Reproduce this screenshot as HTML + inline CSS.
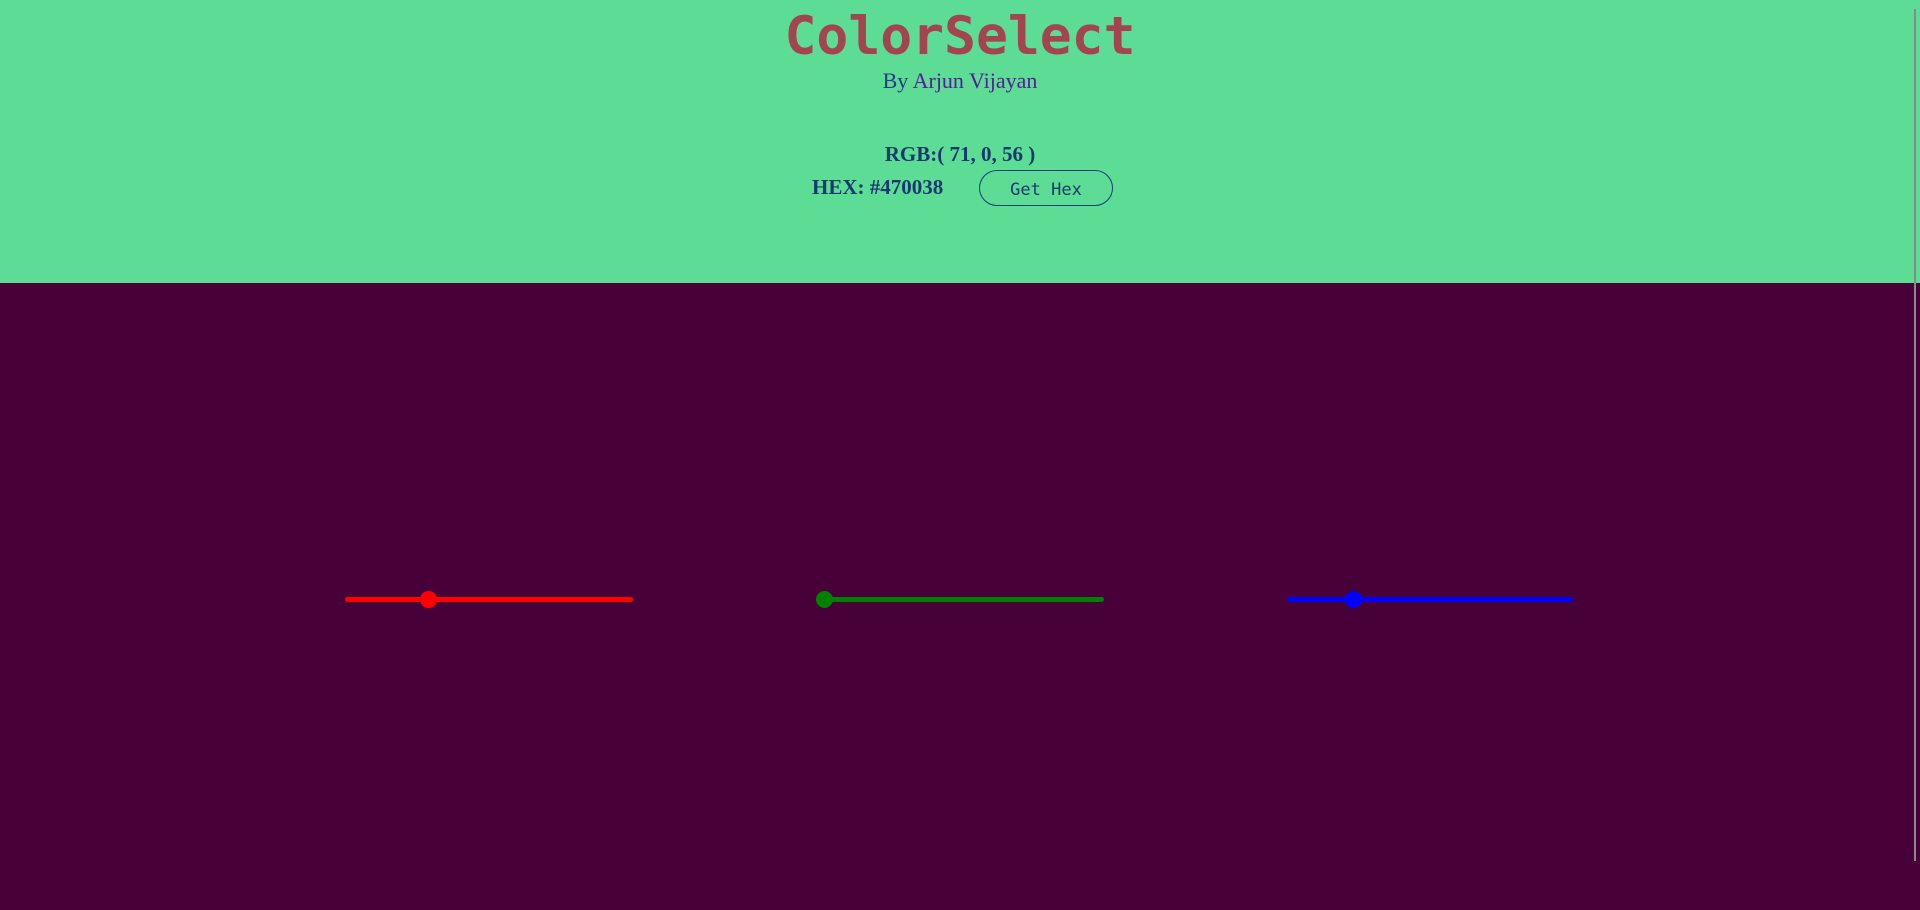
<!DOCTYPE html>
<html><head><meta charset="utf-8"><style>
*{margin:0;padding:0;box-sizing:border-box}
html,body{width:1920px;height:910px;overflow:hidden;background:#470038}
.top{position:absolute;left:0;top:0;width:1920px;height:283px;background:#5cdc95}
.t{position:absolute;white-space:nowrap}
h1{position:absolute;left:0;width:1920px;text-align:center;top:6px;font:bold 53px "DejaVu Sans Mono",monospace;color:#a3444f;padding-left:0}
.sub{left:0;width:1920px;text-align:center;top:68px;font:22px "Liberation Serif",serif;color:#5a1a9a}
.rgb{left:0;width:1920px;text-align:center;top:142px;font:bold 21px "Liberation Serif",serif;color:#173a6e}
.hex{left:812px;top:175px;font:bold 21px "Liberation Serif",serif;color:#173a6e}
.btn{position:absolute;left:979px;top:170px;width:134px;height:36px;border:1.5px solid #173a7e;border-radius:18px;font:17px "DejaVu Sans Mono",monospace;color:#173a6e;text-align:center;line-height:38px}
.tr{position:absolute;top:597px;height:5px;border-radius:3px}
.th{position:absolute;top:591px;width:17px;height:17px;border-radius:50%}
.sb{position:absolute;left:1914px;top:9px;width:2px;height:852px;background:#8a8a8a}
</style></head><body>
<div class="top"></div>
<h1>ColorSelect</h1>
<div class="t sub"><span style="color:#2a3a80">By</span> Arjun Vijayan</div>
<div class="t rgb">RGB:( 71, 0, 56 )</div>
<div class="t hex">HEX: #470038</div>
<div class="btn">Get Hex</div>
<div class="tr" style="left:345px;width:288px;background:#ff0000"></div>
<div class="th" style="left:420px;background:#ff0000"></div>
<div class="tr" style="left:816px;width:288px;background:#008000"></div>
<div class="th" style="left:816px;background:#008000"></div>
<div class="tr" style="left:1287px;width:286px;background:#0000ff"></div>
<div class="th" style="left:1345px;background:#0000ff"></div>
<div class="sb"></div>
</body></html>
